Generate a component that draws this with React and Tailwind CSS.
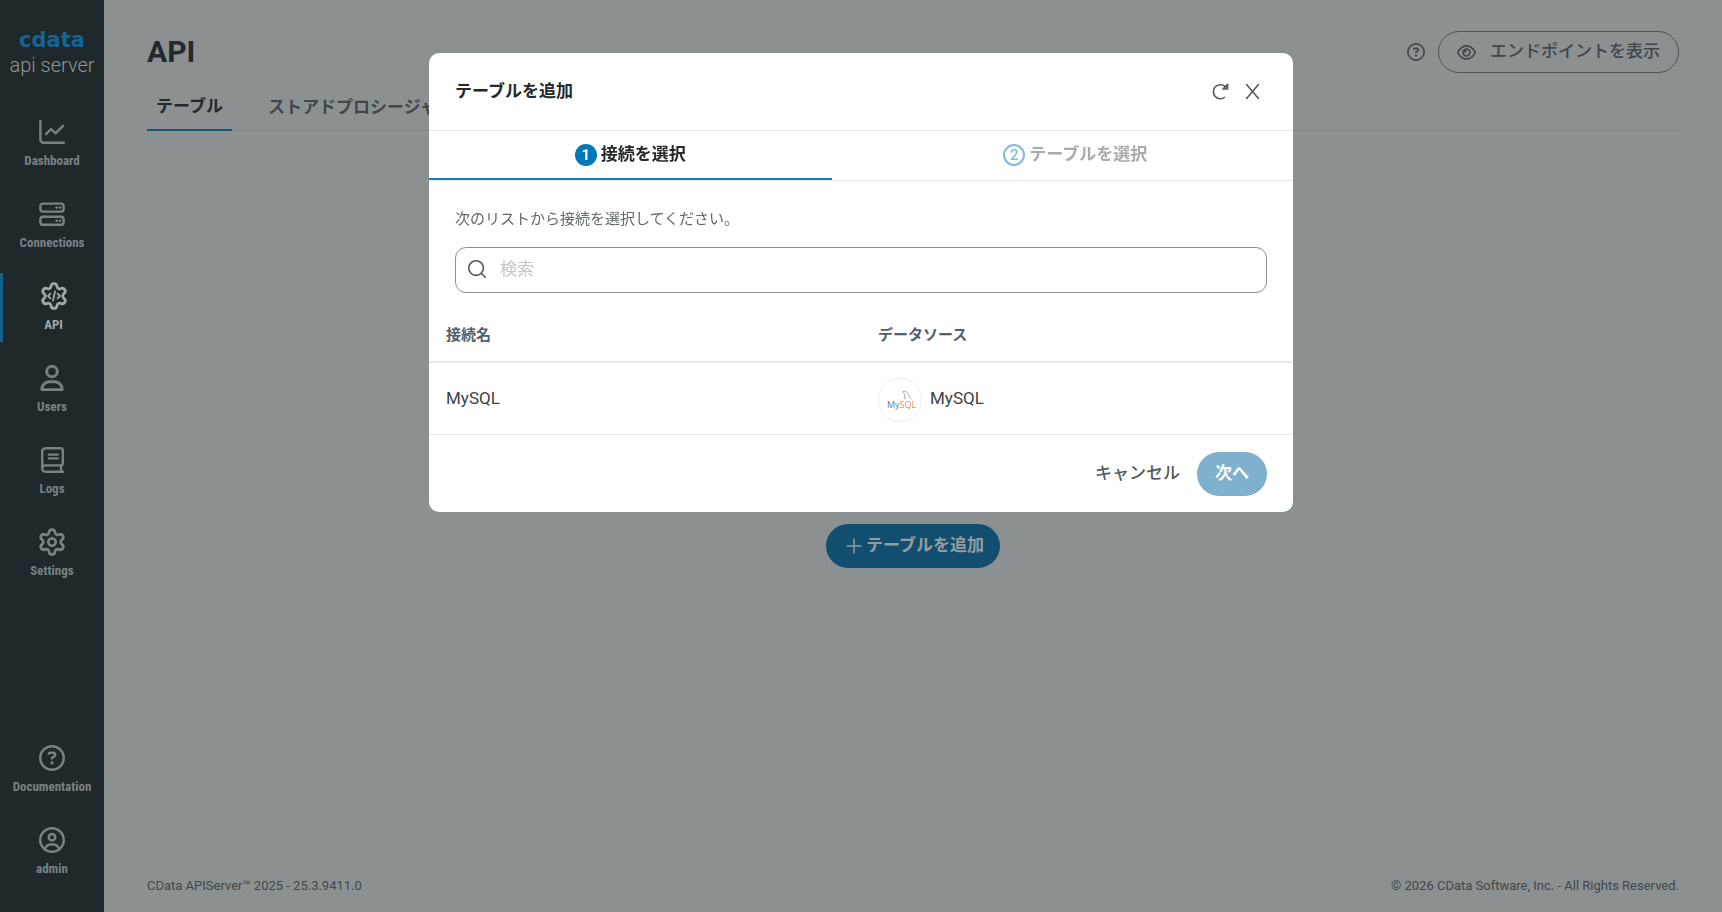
import React, { useState } from 'react';
import { Settings, Search, Plus } from 'lucide-react';
import {
  FaRegUser,
  FaRegCircleQuestion,
  FaRegCircleUser,
  FaRegEye,
} from 'react-icons/fa6';

const DashboardIcon = () => (
  <svg viewBox="0 0 26 26" className="size-[26px]" fill="none" stroke="currentColor" strokeWidth="2.4" strokeLinecap="round" strokeLinejoin="round">
    <path d="M1.4 2.2v18.6a3 3 0 0 0 3 3h20.4" />
    <path d="M7 15.2l5-5.2 4.6 4.4 7.4-7.6" />
  </svg>
);

const ConnectionsIcon = () => (
  <svg viewBox="0 0 26 26" className="size-[26px]" fill="none" stroke="currentColor" strokeWidth="2.4">
    <rect x="1.4" y="2.6" width="23.2" height="8" rx="2.6" />
    <rect x="1.4" y="15.8" width="23.2" height="8" rx="2.6" />
    <g fill="currentColor" stroke="none">
      <circle cx="17.6" cy="6.6" r="1.3" />
      <circle cx="21" cy="6.6" r="1.3" />
      <circle cx="17.6" cy="19.8" r="1.3" />
      <circle cx="21" cy="19.8" r="1.3" />
    </g>
  </svg>
);

const ApiIcon = () => (
  <span className="relative">
    <Settings size={30} strokeWidth={2.2} className="-m-0.5 [&_circle]:hidden" />
    <svg viewBox="0 0 26 26" className="absolute inset-0 size-[26px]" fill="none" stroke="currentColor" strokeWidth="1.8" strokeLinecap="round" strokeLinejoin="round">
      <path d="M9.4 10.6L7 13l2.400 2.400M16.600 10.600L19 13l-2.400 2.400M14 8.400l-2 9.200" />
    </svg>
  </span>
);

const LogsIcon = () => (
  <svg viewBox="0 0 23 26" className="h-[26px] w-[23px]" fill="none" stroke="currentColor" strokeWidth="2.4" strokeLinecap="round">
    <path d="M21.8 24.8H4.6a3.4 3.4 0 0 1-3.4-3.4V4.6a3.4 3.4 0 0 1 3.4-3.4h15.4a1.8 1.8 0 0 1 1.8 1.8v13.6a1.8 1.8 0 0 1-1.8 1.8H4.4a3.2 3.2 0 0 0-3.2 3.2M20 18.6v6" />
    <path d="M7.8 7.600h9M7.800 11.400h9" />
  </svg>
);

const RefreshIcon = () => (
  <svg viewBox="0 0 17 17" className="size-[17px]" fill="none" stroke="currentColor" strokeWidth="1.6">
    <path d="M13 14A7 7 0 1 1 14 4.600" />
    <path d="M15.600 1.400v4.600h-4.600z" fill="#8b9091" strokeLinejoin="round" />
  </svg>
);

const CloseIcon = () => (
  <svg viewBox="0 0 17 17" className="size-[17px]" fill="none" stroke="currentColor" strokeWidth="1.6" strokeLinecap="round">
    <path d="M2.600 1.600l11.800 13.800M14.400 1.600L2.600 15.400" />
  </svg>
);

const MySqlLogo = () => (
  <span className="flex size-11 items-center justify-center rounded-full border border-[#eceeee] bg-white">
    <svg viewBox="0 0 32 20" className="h-5 w-8" aria-hidden="true">
      <path d="M19 1.600c2.600-.6 4.400.4 5.400 2.800.7 1.800 1.200 3.200 3.400 5M19 1.600c.8 1.600 1.600 2.200 1.600 4 0 1.400-.4 2.600.2 3.400.6-.4.800-1 1.200-1.400" fill="none" stroke="#8a9aa5" strokeWidth="0.8" />
      <text x="3" y="17.500" fontSize="9" fontFamily="Open Sans, sans-serif" fill="#5d7f95">
        My<tspan fill="#ee8a3c">SQL</tspan>
      </text>
    </svg>
  </span>
);

const menuItems = [
  { label: 'Dashboard', icon: <DashboardIcon /> },
  { label: 'Connections', icon: <ConnectionsIcon /> },
  { label: 'API', icon: <ApiIcon /> },
  { label: 'Users', icon: <FaRegUser size={26} strokeWidth={10} /> },
  { label: 'Logs', icon: <LogsIcon /> },
  { label: 'Settings', icon: <Settings size={30} strokeWidth={2.2} className="-m-0.5" /> },
];

const accountItems = [
  { label: 'Documentation', icon: <FaRegCircleQuestion size={26} /> },
  { label: 'admin', icon: <FaRegCircleUser size={26} /> },
];

const NavItem = ({ label, icon, active }) => (
  <a
    href="#"
    aria-current={active ? 'page' : undefined}
    className={`flex h-[69px] flex-col items-center justify-center gap-2 font-['Roboto_Condensed','Roboto',sans-serif] text-[13px] font-bold ${
      active ? 'border-l-[3px] border-[#14618f] text-[#a3a8a9]' : 'text-[#798283]'
    }`}
  >
    {icon}
    <span className="leading-4">{label}</span>
  </a>
);

const Sidebar = () => (
  <nav className="flex w-[104px] shrink-0 flex-col bg-[#1f282b] pb-[26px] pt-7">
    <div className="mb-[31px] flex flex-col items-center">
      <span className="font-['DejaVu_Sans'] text-[21px] leading-6 font-bold text-[#12659b]">cdata</span>
      <span className="text-xl leading-[26px] font-light text-[#8f9697]">api server</span>
    </div>
    <div className="flex flex-col gap-[13px]">
      {menuItems.map((item) => (
        <NavItem key={item.label} {...item} active={item.label === 'API'} />
      ))}
    </div>
    <div className="mt-auto flex flex-col gap-[13px]">
      {accountItems.map((item) => (
        <NavItem key={item.label} {...item} />
      ))}
    </div>
  </nav>
);

const Step = ({ number, label, active }) => (
  <button
    type="button"
    className={`flex flex-auto items-start justify-center gap-1 border-b-2 pt-[11px] text-[17px] leading-6 font-bold ${
      active ? 'border-[#1a7cb8] text-[#23292c]' : 'border-transparent text-[#a9abac]'
    }`}
  >
    <span
      className={`mt-0.5 flex size-[22px] items-center justify-center rounded-full text-[15px] leading-5 ${
        active ? 'bg-[#0077bb] font-bold text-white' : 'border-2 border-[#7fbbe0] font-medium text-[#7fbbe0]'
      }`}
    >
      {number}
    </span>
    {label}
  </button>
);

const AddTableDialog = () => {
  const [search, setSearch] = useState('');

  return (
    <div className="fixed inset-0 flex items-start justify-center pt-[53px]">
      <div role="dialog" aria-labelledby="dialog-title" className="w-full max-w-[864px] rounded-[10px] bg-white text-[#23292c]">
        <div className="flex h-[77px] items-center justify-between pr-8 pl-[26px]">
          <h2 id="dialog-title" className="pb-0.5 text-[17px] leading-6 font-bold">テーブルを追加</h2>
          <div className="flex gap-[15px] text-[#54595b]">
            <button type="button" aria-label="更新"><RefreshIcon /></button>
            <button type="button" aria-label="閉じる"><CloseIcon /></button>
          </div>
        </div>

        <div className="flex h-[51px] gap-[26px] border-y border-[#e6e9e9]">
          <Step number="1" label="接続を選択" active />
          <Step number="2" label="テーブルを選択" />
        </div>

        <div className="px-[26px] pt-[27px]">
          <label htmlFor="search" className="block text-[15px] leading-[22px] text-[#62686b]">
            次のリストから接続を選択してください。
          </label>
          <div className="mt-[17px] flex h-[46px] items-center gap-3 rounded-[11px] border border-[#8b9091] px-2.5">
            <Search size={22} strokeWidth={1.8} className="mb-0.5 text-[#54595b]" />
            <input
              id="search"
              type="text"
              value={search}
              onChange={(e) => setSearch(e.target.value)}
              placeholder="検索"
              className="flex-1 text-[17px] outline-none placeholder:text-[#c3c6c9]"
            />
          </div>
        </div>

        <table className="mt-[14px] w-full table-fixed text-left">
          <thead>
            <tr className="h-[55px] border-b-2 border-[#e6e9e9] text-[15px] text-[#556066]">
              <th className="px-[17px] pt-0.5 font-bold">接続名</th>
              <th className="px-[17px] pt-0.5 font-bold">データソース</th>
            </tr>
          </thead>
          <tbody>
            <tr className="h-[72px] border-b border-[#e6e9e9] text-[17px] leading-6 text-[#3c4245]">
              <td className="px-[17px]">MySQL</td>
              <td className="px-[17px] pt-1">
                <div className="flex items-center gap-2">
                  <MySqlLogo />
                  <span className="pb-1">MySQL</span>
                </div>
              </td>
            </tr>
          </tbody>
        </table>

        <div className="flex justify-end gap-[17px] px-[26px] pt-[17px] pb-4 text-[17px]">
          <button type="button" className="font-medium text-[#54595b]">キャンセル</button>
          <button type="button" className="h-11 rounded-full bg-[#7fb0ce] px-[18px] font-bold text-white">次へ</button>
        </div>
      </div>
    </div>
  );
};

const App = () => {
  return (
    <div className="flex min-h-screen bg-[#8b9091] font-['Roboto','Noto_Sans_CJK_JP',sans-serif]">
      <Sidebar />

      <main className="flex flex-1 flex-col px-[43px] text-[#3f474a]">
        <header className="flex items-center justify-between pt-[31px]">
          <h1 className="text-[30px] leading-[42px] font-bold text-[#23292c]">API</h1>
          <div className="flex items-center gap-[13px]">
            <button type="button" aria-label="ヘルプ"><FaRegCircleQuestion size={18} /></button>
            <button type="button" className="flex h-[42px] items-center gap-3.5 rounded-full border border-[#4d5558] px-[18px] text-[17px] font-medium">
              <FaRegEye size={19} />
              エンドポイントを表示
            </button>
          </div>
        </header>

        <div className="mt-3 flex gap-[27px] border-b border-[#81888a] text-[17px] font-bold">
          <button type="button" className="-mb-px h-[46px] border-b-2 border-[#1d5570] px-[9px] text-[#23292c]">テーブル</button>
          <button type="button" className="px-[9px]">ストアドプロシージャ</button>
        </div>

        <div className="flex flex-1 items-start justify-center pt-[393px]">
          <button type="button" className="flex h-11 items-center rounded-full bg-[#124e70] px-4 text-[17px] font-bold text-[#959c9f]">
            <Plus size={24} strokeWidth={1.5} />
            テーブルを追加
          </button>
        </div>

        <footer className="flex justify-between pb-4 text-[13px] leading-5">
          <span>CData APIServer™ 2025 - 25.3.9411.0</span>
          <span>© 2026 CData Software, Inc. - All Rights Reserved.</span>
        </footer>
      </main>

      <AddTableDialog />
    </div>
  );
};

export default App;
